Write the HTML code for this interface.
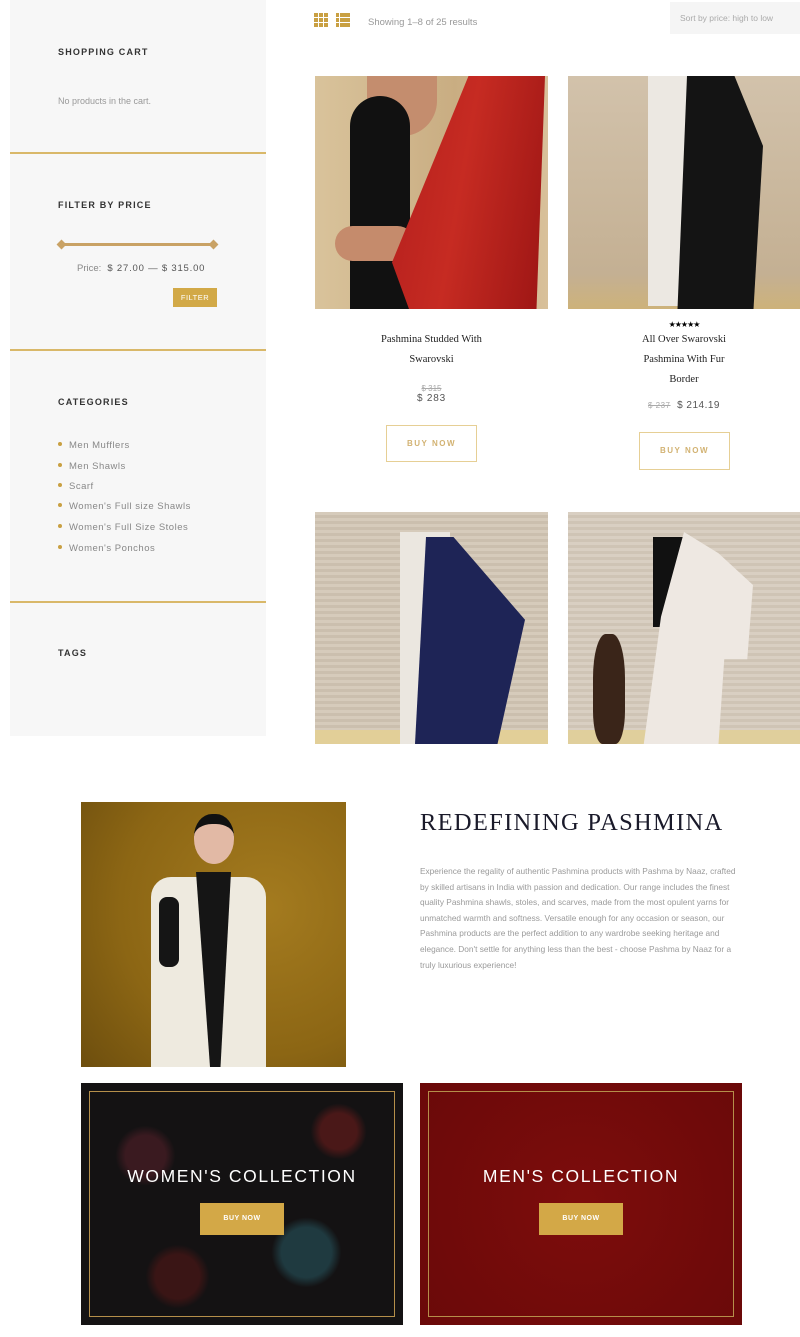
<!DOCTYPE html>
<html><head><meta charset="utf-8"><style>
*{margin:0;padding:0;box-sizing:border-box}
body{width:800px;height:1337px;position:relative;background:#fff;font-family:"Liberation Sans",sans-serif;overflow:hidden}
.a{position:absolute}
.side{left:10px;top:0;width:256px;height:736px;background:#f7f7f7}
.h{font-size:9px;font-weight:bold;letter-spacing:1.2px;color:#333}
.line{left:10px;width:256px;height:2px;background:#d9b869}
.cat{font-size:9.5px;color:#888;letter-spacing:.5px}
.cat:before{content:"";display:inline-block;width:4px;height:4px;border-radius:2px;background:#c9a042;margin-right:7px;vertical-align:2px}
.img{overflow:hidden}
.t{font-family:"Liberation Serif",serif;font-size:10.5px;color:#222;text-align:center;line-height:20px}
.btn{border:1px solid #e6cf95;color:#d2b272;font-size:8px;font-weight:bold;letter-spacing:1.5px;text-align:center}
.p{font-size:8.3px;color:#9a9a9a;line-height:15.6px}
.coll{color:#fff;font-size:17.5px;letter-spacing:1.6px;text-align:center}
.gb{background:#d3a847;color:#fff;font-size:7px;font-weight:bold;text-align:center;line-height:32px;letter-spacing:.5px}
</style></head><body>
<div class="a side"></div>
<div class="a h" style="left:58px;top:47px">SHOPPING CART</div>
<div class="a" style="left:58px;top:96px;font-size:9px;color:#999">No products in the cart.</div>
<div class="a line" style="top:152px"></div>
<div class="a h" style="left:58px;top:200px">FILTER BY PRICE</div>
<div class="a" style="left:60px;top:243px;width:156px;height:3px;background:#c9a265"></div>
<div class="a" style="left:58px;top:241px;width:7px;height:7px;background:#c9a265;transform:rotate(45deg)"></div>
<div class="a" style="left:210px;top:241px;width:7px;height:7px;background:#c9a265;transform:rotate(45deg)"></div>
<div class="a" style="left:77px;top:263px;font-size:9.5px;color:#888">Price: <b style="color:#555;font-weight:normal;letter-spacing:.8px">&nbsp;$ 27.00 — $ 315.00</b></div>
<div class="a" style="left:173px;top:288px;width:44px;height:19px;background:#d2a947;color:#fff;font-size:7.5px;text-align:center;line-height:19px;letter-spacing:.5px">FILTER</div>
<div class="a line" style="top:349px"></div>
<div class="a h" style="left:58px;top:397px">CATEGORIES</div>
<div class="a cat" style="left:58px;top:440px">Men Mufflers</div>
<div class="a cat" style="left:58px;top:461px">Men Shawls</div>
<div class="a cat" style="left:58px;top:481px">Scarf</div>
<div class="a cat" style="left:58px;top:501px">Women's Full size Shawls</div>
<div class="a cat" style="left:58px;top:522px">Women's Full Size Stoles</div>
<div class="a cat" style="left:58px;top:543px">Women's Ponchos</div>
<div class="a line" style="top:601px"></div>
<div class="a h" style="left:58px;top:648px">TAGS</div>

<svg class="a" style="left:314px;top:13px" width="38" height="15"><g fill="#c9a042"><rect x="0" y="0" width="4" height="4"/><rect x="5" y="0" width="4" height="4"/><rect x="10" y="0" width="4" height="4"/><rect x="0" y="5" width="4" height="4"/><rect x="5" y="5" width="4" height="4"/><rect x="10" y="5" width="4" height="4"/><rect x="0" y="10" width="4" height="4"/><rect x="5" y="10" width="4" height="4"/><rect x="10" y="10" width="4" height="4"/><rect x="22" y="0" width="3" height="4"/><rect x="26" y="0" width="10" height="4"/><rect x="22" y="5" width="3" height="4"/><rect x="26" y="5" width="10" height="4"/><rect x="22" y="10" width="3" height="4"/><rect x="26" y="10" width="10" height="4"/></g></svg>
<div class="a" style="left:368px;top:17px;font-size:9.5px;color:#999">Showing 1–8 of 25 results</div>
<div class="a" style="left:670px;top:2px;width:130px;height:32px;background:#f5f5f5;font-size:8.5px;color:#aaa;padding:11px 0 0 10px;white-space:nowrap">Sort by price: high to low</div>

<div class="a img" style="left:315px;top:76px;width:233px;height:233px;background:linear-gradient(90deg,#d9c39b,#c9ad82 60%,#d8c09a)">
 <div class="a" style="left:52px;top:0;width:70px;height:60px;background:#c48d6e;border-radius:0 0 40px 40px"></div>
 <div class="a" style="left:35px;top:20px;width:60px;height:213px;background:#111;border-radius:30px 30px 0 0"></div>
 <div class="a" style="left:20px;top:150px;width:80px;height:35px;background:#c58b6c;border-radius:18px"></div>
 <div class="a" style="left:60px;top:0;width:170px;height:233px;background:linear-gradient(100deg,#b01c1c,#c62b22 50%,#9c1514);clip-path:polygon(55% 0,100% 0,95% 100%,20% 100%,10% 80%)"></div>
</div>
<div class="a img" style="left:568px;top:76px;width:232px;height:233px;background:linear-gradient(180deg,#d2c2ab,#c4b093 85%,#cdb27a)">
 <div class="a" style="left:80px;top:0;width:60px;height:230px;background:#ece8e2"></div>
 <div class="a" style="left:100px;top:0;width:95px;height:233px;background:#141414;clip-path:polygon(20% 0,70% 0,100% 30%,90% 100%,10% 100%)"></div>
</div>
<div class="a t" style="left:315px;top:330px;width:233px">Pashmina Studded With<br>Swarovski</div>
<div class="a" style="left:315px;top:384px;width:233px;text-align:center;font-size:8px;color:#aaa;text-decoration:line-through">$ 315</div>
<div class="a" style="left:315px;top:393px;width:233px;text-align:center;font-size:10px;color:#555;letter-spacing:.8px">$ 283</div>
<div class="a btn" style="left:386px;top:425px;width:91px;height:37px;line-height:35px">BUY NOW</div>
<div class="a" style="left:568px;top:320px;width:232px;text-align:center;font-size:8px;color:#000;letter-spacing:-1px">★★★★★</div>
<div class="a t" style="left:568px;top:330px;width:232px">All Over Swarovski<br>Pashmina With Fur<br>Border</div>
<div class="a" style="left:568px;top:400px;width:232px;text-align:center;font-size:10px;color:#555;letter-spacing:.5px"><s style="font-size:8px;color:#aaa">$ 237</s>&nbsp; $ 214.19</div>
<div class="a btn" style="left:639px;top:432px;width:91px;height:38px;line-height:36px">BUY NOW</div>

<div class="a img" style="left:315px;top:512px;width:233px;height:232px;background:repeating-linear-gradient(180deg,#d6cbbb 0 3px,#cbbfae 3px 6px)">
 <div class="a" style="left:0;top:218px;width:233px;height:14px;background:#e2cf98"></div>
 <div class="a" style="left:85px;top:20px;width:50px;height:212px;background:#ebe7e0"></div>
 <div class="a" style="left:100px;top:25px;width:110px;height:207px;background:#1e2456;clip-path:polygon(10% 0,35% 0,100% 40%,75% 100%,0 100%)"></div>
</div>
<div class="a img" style="left:568px;top:512px;width:232px;height:232px;background:repeating-linear-gradient(180deg,#d9cfc2 0 3px,#cfc4b5 3px 6px)">
 <div class="a" style="left:0;top:218px;width:232px;height:14px;background:#e0cf9c"></div>
 <div class="a" style="left:25px;top:122px;width:32px;height:110px;background:#3a2519;border-radius:40% 40% 30% 30%"></div>
 <div class="a" style="left:85px;top:25px;width:30px;height:90px;background:#111"></div>
 <div class="a" style="left:70px;top:20px;width:115px;height:212px;background:#eee8e2;clip-path:polygon(40% 0,70% 10%,100% 25%,95% 60%,75% 60%,70% 100%,5% 100%,20% 40%)"></div>
</div>

<div class="a img" style="left:81px;top:802px;width:265px;height:265px;background:radial-gradient(circle at 70% 40%,#a47b1f,#8c6614 60%,#6d4e0e)">
 <div class="a" style="left:113px;top:12px;width:40px;height:50px;background:#e2b9a5;border-radius:45% 45% 50% 50%;border-top:10px solid #111"></div>
 <div class="a" style="left:70px;top:75px;width:115px;height:190px;background:#eeeadf;border-radius:20px 20px 0 0"></div>
 <div class="a" style="left:115px;top:70px;width:35px;height:195px;background:#151515;clip-path:polygon(0 0,100% 0,70% 100%,40% 100%)"></div>
 <div class="a" style="left:78px;top:95px;width:20px;height:70px;background:#151515;border-radius:8px"></div>
</div>
<div class="a" style="left:420px;top:809px;font-family:'Liberation Serif',serif;font-size:24.5px;color:#1a1a2a;letter-spacing:1.3px;white-space:nowrap">REDEFINING PASHMINA</div>
<div class="a p" style="left:420px;top:864px;width:322px">Experience the regality of authentic Pashmina products with Pashma by Naaz, crafted by skilled artisans in India with passion and dedication. Our range includes the finest quality Pashmina shawls, stoles, and scarves, made from the most opulent yarns for unmatched warmth and softness. Versatile enough for any occasion or season, our Pashmina products are the perfect addition to any wardrobe seeking heritage and elegance. Don't settle for anything less than the best - choose Pashma by Naaz for a truly luxurious experience!</div>

<div class="a" style="left:81px;top:1083px;width:322px;height:242px;background:radial-gradient(circle at 20% 30%,#3a1a20 0 20px,transparent 30px),radial-gradient(circle at 70% 70%,#1f3a40 0 25px,transparent 35px),radial-gradient(circle at 80% 20%,#4a1818 0 18px,transparent 28px),radial-gradient(circle at 30% 80%,#3a1515 0 22px,transparent 32px),#141213"></div>
<div class="a" style="left:89px;top:1091px;width:306px;height:226px;border:1px solid #b58f4a"></div>
<div class="a coll" style="left:81px;top:1166px;width:322px">WOMEN'S COLLECTION</div>
<div class="a gb" style="left:200px;top:1203px;width:84px;height:32px">BUY NOW</div>
<div class="a" style="left:420px;top:1083px;width:322px;height:242px;background:radial-gradient(circle at 50% 50%,#7d0d0c,#6a0909)"></div>
<div class="a" style="left:428px;top:1091px;width:306px;height:226px;border:1px solid #b58f4a"></div>
<div class="a coll" style="left:420px;top:1166px;width:322px">MEN'S COLLECTION</div>
<div class="a gb" style="left:539px;top:1203px;width:84px;height:32px">BUY NOW</div>
</body></html>
